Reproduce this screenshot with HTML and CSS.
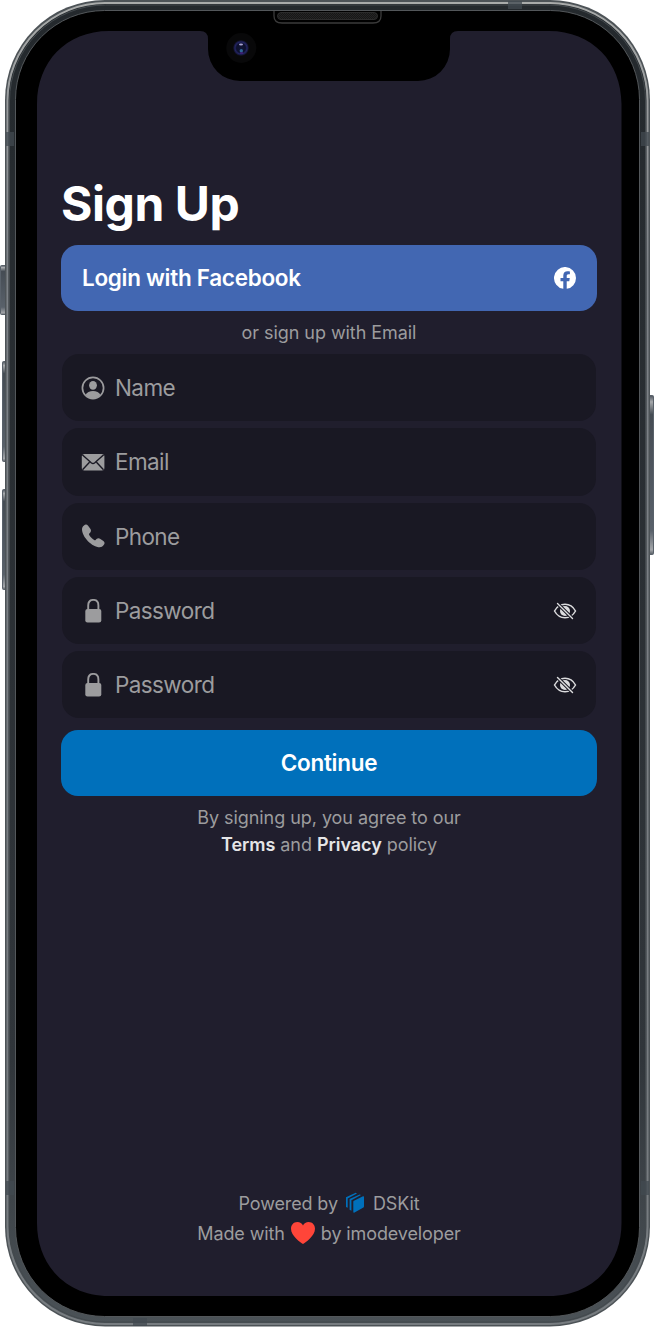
FILE: index.html
```html
<!DOCTYPE html>
<html lang="en">
<head>
<meta charset="utf-8">
<title>Sign Up</title>
<link rel="stylesheet" href="styles.css">
</head>
<body>
<div class="device">
<svg class="frame" viewBox="0 0 654 1327" aria-hidden="true">
  <defs>
    <linearGradient id="metal" x1="0" y1="0" x2="0" y2="1"><stop offset="0" stop-color="#24292d"/><stop offset=".8" stop-color="#30353a"/><stop offset="1" stop-color="#4b5257"/></linearGradient>
    <linearGradient id="shine" x1="0" y1="0" x2="0" y2="1"><stop offset="0" stop-color="#a9abaa"/><stop offset=".08" stop-color="#999c9e"/><stop offset=".2" stop-color="#7d8287"/><stop offset=".9" stop-color="#777c80"/><stop offset="1" stop-color="#777c80"/></linearGradient>
    <linearGradient id="key" x1="0" y1="0" x2="0" y2="1"><stop offset="0" stop-color="#4b535d"/><stop offset=".04" stop-color="#a6a9ac"/><stop offset=".12" stop-color="#454c54"/><stop offset=".85" stop-color="#59616a"/><stop offset=".97" stop-color="#a3a6aa"/><stop offset="1" stop-color="#555b62"/></linearGradient>
    <radialGradient id="lens"><stop offset="0" stop-color="#111536"/><stop offset=".55" stop-color="#0d102c"/><stop offset=".75" stop-color="#232463"/><stop offset="1" stop-color="#0b0b12"/></radialGradient>
    <pattern id="mesh" width="2" height="2" patternUnits="userSpaceOnUse"><path fill="#171717" d="M0 0h2v2H0z"/><path fill="#252525" d="M0 0h1v1H0zM1 1h1v1H1z"/></pattern>
  </defs>
  <g fill="url(#key)" stroke="#59616a">
    <rect x=".5" y="265.500" width="7" height="49" rx="1"/>
    <rect x="2.500" y="361.500" width="5" height="100" rx="1"/>
    <rect x="2.500" y="489.500" width="5" height="100" rx="1"/>
    <rect x="648.500" y="395.500" width="5" height="159" rx="1"/>
  </g>
  <rect x="5" y="0" width="645" height="1326.500" rx="100" fill="#4d5357"/>
  <rect x="7.500" y="3" width="640" height="1321" rx="97.500" fill="url(#metal)" stroke="url(#shine)" stroke-width="2"/>
  <rect x="9.500" y="5" width="636" height="1317" rx="96" fill="none" stroke="#43494d"/>
  <g fill="#414a50" opacity=".75"><path d="M6 132h8v14H6zM641 132h8v14h-8zM6 1181h8v14H6zM641 1181h8v14h-8zM508 1h14v8h-14zM133 1318h14v8h-14z"/></g>
  <rect x="15.500" y="10.500" width="624" height="1306" rx="89" fill="#000" stroke="#53575a"/>
  <path d="M274 11v5q0 7 8 7h91q8 0 8-7v-5" fill="#000" stroke="#3b3b3b" stroke-width="1.300"/>
  <rect x="277.500" y="12.500" width="100" height="7" rx="3.500" fill="url(#mesh)" stroke="#2c2c2c"/>
  <path fill="#201e2d" d="M109 31H200q8 0 8 8V49a32 32 0 0 0 32 32H418a32 32 0 0 0 32-32V39q0-8 8-8H549C592 31 621.500 62 621.500 104V1223C621.500 1265 592 1296 549 1296H109C66 1296 37 1265 37 1223V104C37 62 66 31 109 31Z"/>
  <circle cx="241.300" cy="48" r="15" fill="#080809"/>
  <circle cx="241" cy="48" r="8" fill="url(#lens)"/>
  <ellipse cx="241" cy="44.500" rx="2" ry="1" fill="#aaa4d3"/><circle cx="241.300" cy="50.800" r="1.700" fill="#2f6797"/><path d="M240 53h3" stroke="#582092"/>
</svg>
<main class="screen">
  <h1 class="title">Sign Up</h1>
  <button class="button facebook"><span>Login with Facebook</span>
    <svg class="fb" viewBox="0 0 24 24"><path fill="#fff" d="M24 12a12 12 0 1 0-13.870 11.850v-8.380H7.080V12h3.050V9.360c0-3.010 1.790-4.670 4.530-4.670 1.310 0 2.690.23 2.690.23v2.950h-1.520c-1.490 0-1.950.93-1.950 1.880V12h3.320l-.53 3.470h-2.800v8.380A12 12 0 0 0 24 12Z"/></svg>
  </button>
  <p class="hint">or sign up with Email</p>
  <form class="fields">
    <label class="field"><svg class="icon" viewBox="0 0 24 24"><circle cx="12" cy="12" r="10.600" fill="none" stroke="currentColor" stroke-width="1.700"/><ellipse cx="12" cy="9.300" rx="3.900" ry="4.400" fill="currentColor"/><path fill="currentColor" d="M4.500 19c1.200-2.600 4.200-3.900 7.500-3.900s6.300 1.300 7.500 3.900c-2 2.300-4.600 3.500-7.500 3.500S6.500 21.300 4.500 19Z"/></svg><span>Name</span></label>
    <label class="field"><svg class="icon" viewBox="0 0 24 24"><rect x=".8" y="4" width="22.600" height="16.400" rx="2.500" fill="currentColor"/><path d="m1.300 4.800 8.900 8q1.800 1.500 3.600 0l8.900-8M1.500 19.700l7-7.500M22.500 19.700l-7-7.500" fill="none" stroke="#191823" stroke-width="1.400"/></svg><span>Email</span></label>
    <label class="field"><svg class="icon" viewBox="0 0 24 24"><path fill="currentColor" d="M1 5.300C1 3.800 1.600 2.500 3 1.400 4.400.2 5.900.3 7.100 1.800l2.200 3c1 1.400.9 2.700-.2 3.900l-.8.900c-.4.500-.4.900-.1 1.400 1.200 1.900 3 3.700 5 5 .5.300 1 .3 1.400-.1l.9-.8c1.200-1.100 2.500-1.200 3.900-.2l3 2.200c1.500 1.200 1.500 2.600.3 4-1.200 1.500-2.400 2.200-3.900 2.200C11.100 23.300 1 13.100 1 5.300Z"/></svg><span>Phone</span></label>
    <label class="field"><svg class="icon" viewBox="0 0 24 24"><rect x="4.300" y="9.900" width="16" height="13.500" rx="2.200" fill="currentColor"/><path d="M7.200 11V6.500c0-3.400 2-5.600 5.100-5.600s5.100 2.200 5.100 5.600V11" fill="none" stroke="currentColor" stroke-width="1.900"/></svg><span>Password</span><svg class="eye" viewBox="0 0 24 18"><path d="M1.500 9C3.700 5 7.500 2.300 12 2.300S20.300 5 22.500 9c-2.200 4-6 6.700-10.500 6.700S3.700 13 1.500 9Z" fill="none" stroke="#dcdcde" stroke-width="1.500"/><circle cx="12" cy="9" r="5" fill="#dcdcde"/><path d="m4.500 1.500 15 15" stroke="#191823" stroke-width="3.300"/><path d="m4.500 1.500 15 15" stroke="#dcdcde" stroke-width="1.400" stroke-linecap="round"/></svg></label>
    <label class="field"><svg class="icon" viewBox="0 0 24 24"><rect x="4.300" y="9.900" width="16" height="13.500" rx="2.200" fill="currentColor"/><path d="M7.200 11V6.500c0-3.400 2-5.600 5.100-5.600s5.100 2.200 5.100 5.600V11" fill="none" stroke="currentColor" stroke-width="1.900"/></svg><span>Password</span><svg class="eye" viewBox="0 0 24 18"><path d="M1.500 9C3.700 5 7.500 2.300 12 2.300S20.300 5 22.500 9c-2.200 4-6 6.700-10.500 6.700S3.700 13 1.500 9Z" fill="none" stroke="#dcdcde" stroke-width="1.500"/><circle cx="12" cy="9" r="5" fill="#dcdcde"/><path d="m4.500 1.500 15 15" stroke="#191823" stroke-width="3.300"/><path d="m4.500 1.500 15 15" stroke="#dcdcde" stroke-width="1.400" stroke-linecap="round"/></svg></label>
  </form>
  <button class="button continue">Continue</button>
  <p class="legal">By signing up, you agree to our<br><b>Terms</b> and <b>Privacy</b> policy</p>
  <footer class="footer">
    <div class="credit"><span>Powered by</span><svg class="kit" viewBox="0 0 18 20"><g fill="#0070bb"><path d="M7.500 8 17 3.300q1-.4 1 .7v9.200q0 1-1 1.500l-8.500 4.800q-1.200.6-1.200-.7V8.700Z"/><path d="M3.600 6.100 13.700 1.400l1.300.7-9.600 5.100v10.500L3.600 16.700ZM0 4.300 9.700-.2l1.300.7-9.300 5v9.300L0 14Z"/></g></svg><span>DSKit</span></div>
    <div class="credit"><span>Made with</span><svg class="heart" viewBox="0 0 24 22"><path fill="#ff4539" d="M12 22C9.500 20.600 0 14 0 6.800 0 2.900 2.700 0 6.300 0 9 0 11 1.300 12 3.500 13 1.300 15 0 17.700 0 21.300 0 24 2.900 24 6.800 24 14 14.500 20.600 12 22Z"/></svg><span>by imodeveloper</span></div>
  </footer>
</main>
</div>
</body>
</html>
```
FILE: styles.css
```css
* { box-sizing: border-box; }
body { margin: 0; background: #fff; font-family: Inter, "Liberation Sans", sans-serif; }
.device { position: relative; width: 654px; height: 1327px; overflow: hidden; }
.frame { position: absolute; inset: 0; width: 654px; height: 1327px; }
.screen { position: relative; display: flex; flex-direction: column; height: 1327px; padding: 174px 57px 79px 61px; color: #9c9c9e; }
.title { margin: 0; height: 71px; color: #fff; font-size: 48px; line-height: 60px; font-weight: 700; letter-spacing: -.45px; }
.button { flex: none; display: flex; align-items: center; width: 536px; height: 66px; padding: 0 21px 2px; border: 0; border-radius: 17px; color: #fff; font: 600 22.5px Inter, sans-serif; letter-spacing: -.3px; }
.facebook { justify-content: space-between; background: #4267b2; }
.continue { justify-content: center; background: #0070bb; margin-top: 12px; }
.fb { width: 22px; height: 22px; margin-top: 2px; }
.hint { margin: 0; height: 43px; line-height: 43px; text-align: center; font-size: 18px; letter-spacing: -.06px; }
.fields { display: grid; gap: 7px; padding: 0 1px; }
.field { display: flex; align-items: center; height: 67.3px; padding: 0 19px; border-radius: 17px; background: #191823; font-size: 22.5px; letter-spacing: -.6px; }
.icon { width: 24px; height: 24px; margin-right: 10px; }
.eye { width: 24px; height: 18px; margin-left: auto; }
.legal { margin: 8px 0 0; text-align: center; font-size: 18px; line-height: 27px; letter-spacing: -.05px; }
.legal b { color: #e5e5e7; font-weight: 600; }
.footer { margin-top: auto; font-size: 18px; letter-spacing: -.12px; }
.credit { display: flex; align-items: center; justify-content: center; height: 30px; }
.kit { width: 18px; height: 20px; margin: 0 9px 0 8px; overflow: visible; }
.heart { width: 24px; height: 22px; margin: 0 6px; }
```
